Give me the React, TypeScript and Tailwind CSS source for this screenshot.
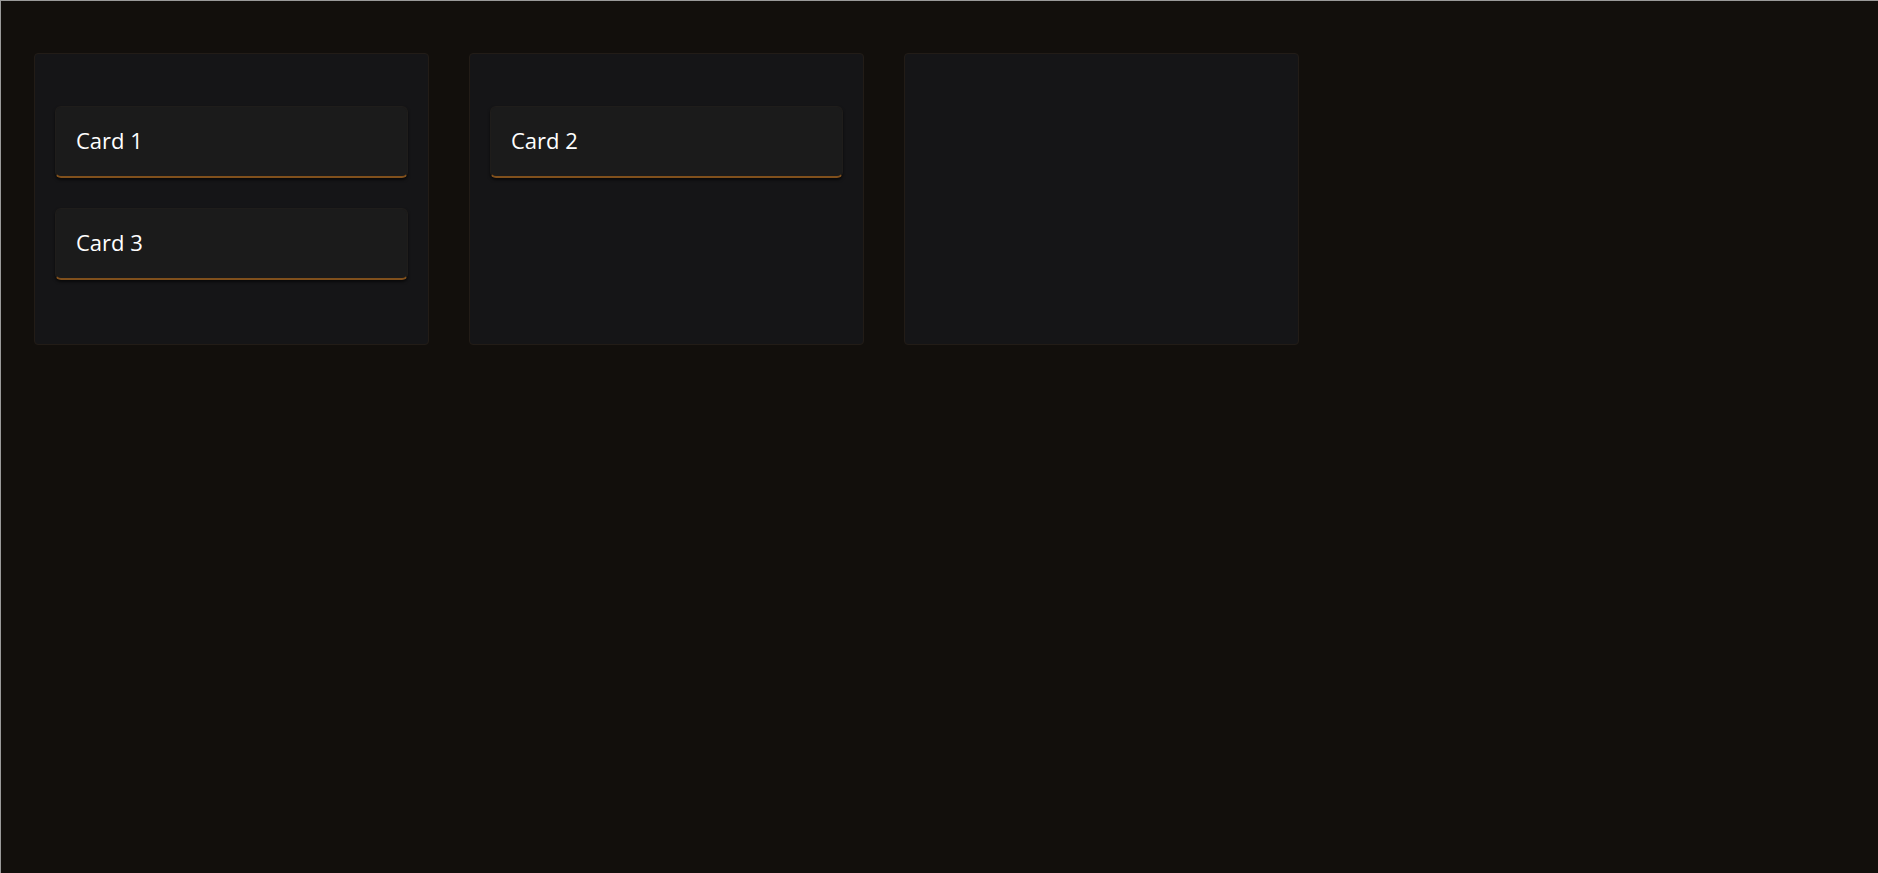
import React from 'react';

type Column = {
    id: string;
    cards: string[];
};

const columns: Column[] = [
    { id: 'todo', cards: ['Card 1', 'Card 3'] },
    { id: 'doing', cards: ['Card 2'] },
    { id: 'done', cards: [] },
];

function Card({ title }: { title: string }) {
    return (
        <div className="h-[72px] flex items-center px-5 rounded-md bg-[#1b1b1b] border border-[#1f1d1b] border-b-2 border-b-[#80501c] shadow-[0_2px_3px_rgba(0,0,0,0.6)]">
            <span className="text-[22px] font-medium text-white -mt-[2px]">{title}</span>
        </div>
    );
}

export default function App() {
    return (
        <div
            className="w-[1878px] h-[873px] bg-[#120f0c] border-t border-l border-[#9a9a9a] overflow-hidden"
            style={{ fontFamily: '"Open Sans", Lato, sans-serif' }}
        >
            <div className="flex gap-10 pl-[33px] pt-[52px]">
                {columns.map((col) => (
                    <div
                        key={col.id}
                        className="w-[395px] h-[292px] rounded-[4px] bg-[#151517] border border-[#221c17] px-5 pt-[52px] flex flex-col gap-[30px]"
                    >
                        {col.cards.map((c) => (
                            <Card key={c} title={c} />
                        ))}
                    </div>
                ))}
            </div>
        </div>
    );
}
